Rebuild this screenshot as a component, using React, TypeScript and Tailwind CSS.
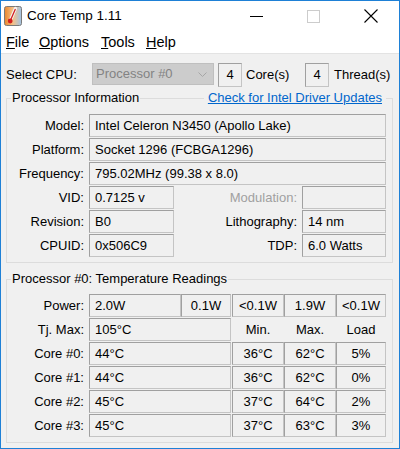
import type { ReactNode } from 'react';

const FONT = "font-['Liberation_Sans',Arial,sans-serif]";
const EDGE = 'border border-[#c4c4c4] border-t-[#a0a0a0] border-l-[#a0a0a0]';

function Field({ className, center, children }: { className: string; center?: boolean; children?: ReactNode }) {
  return (
    <div className={`flex h-[23px] shrink-0 items-center ${EDGE} ${center ? 'justify-center' : 'pl-[5px]'} ${className}`}>
      {children}
    </div>
  );
}

function Label({ className, muted, children }: { className: string; muted?: boolean; children: ReactNode }) {
  return <div className={`shrink-0 text-right ${muted ? 'text-[#a0a0a0]' : 'text-black'} ${className}`}>{children}</div>;
}

function Row({ children }: { children: ReactNode }) {
  return <div className="mb-[1px] flex h-[23px] items-center">{children}</div>;
}

function AppIcon() {
  return (
    <svg width="18" height="20" viewBox="0 0 18 20">
      <defs>
        <linearGradient id="ic" x1="0" y1="0" x2="1" y2="0">
          <stop offset="0" stopColor="#e9862c" />
          <stop offset="0.5" stopColor="#f4c28a" />
          <stop offset="1" stopColor="#9fc3e6" />
        </linearGradient>
      </defs>
      <rect x="0.5" y="0.5" width="17" height="19" rx="2" fill="url(#ic)" stroke="#7a7a7a" />
      <path d="M11.5 2.5 L6.5 14" stroke="#f4f4f4" strokeWidth="3.2" strokeLinecap="round" />
      <path d="M11.2 3.5 L6.8 13.5" stroke="#d41f1f" strokeWidth="1.3" strokeLinecap="round" />
      <circle cx="6.2" cy="15" r="2.4" fill="#d41f1f" />
    </svg>
  );
}

const cores = [
  { name: 'Core #0:', t: '44°C', min: '36°C', max: '62°C', load: '5%' },
  { name: 'Core #1:', t: '44°C', min: '36°C', max: '62°C', load: '0%' },
  { name: 'Core #2:', t: '45°C', min: '37°C', max: '64°C', load: '2%' },
  { name: 'Core #3:', t: '45°C', min: '37°C', max: '63°C', load: '3%' },
];

export default function App() {
  return (
    <div className={`h-[449px] w-[400px] overflow-hidden border border-[#1e80d6] bg-[#f0f0f0] text-[13px] leading-[16px] text-black ${FONT}`}>
      {/* Title bar */}
      <div className="flex h-[30px] items-center bg-white">
        <div className="ml-[3px] flex w-[23px] items-center">
          <AppIcon />
        </div>
        <div className="text-[13.5px]">Core Temp 1.11</div>
        <div className="ml-auto flex h-full">
          <div className="flex h-full w-[57px] items-center justify-center">
            <svg width="13" height="13" viewBox="0 0 13 13">
              <path d="M0 6.5 H13" stroke="#000" strokeWidth="1" />
            </svg>
          </div>
          <div className="flex h-full w-[57px] items-center justify-center">
            <svg width="13" height="13" viewBox="0 0 13 13">
              <rect x="0.5" y="0.5" width="12" height="12" fill="none" stroke="#cccccc" strokeWidth="1" />
            </svg>
          </div>
          <div className="flex h-full w-[57px] items-center justify-center">
            <svg width="14" height="14" viewBox="0 0 14 14">
              <path d="M0.5 0.5 L13.5 13.5 M13.5 0.5 L0.5 13.5" stroke="#000" strokeWidth="1.1" />
            </svg>
          </div>
        </div>
      </div>

      {/* Menu bar */}
      <div className="flex h-[23px] items-center border-b border-[#e3e3e3] bg-white pl-[5px] text-[14.5px]">
        <span className="w-[33px]"><u>F</u>ile</span>
        <span className="w-[62px]"><u>O</u>ptions</span>
        <span className="w-[45px]"><u>T</u>ools</span>
        <span><u>H</u>elp</span>
      </div>

      {/* Select CPU */}
      <div className="mt-[9px] flex h-[24px] items-center pl-[5px]">
        <div className="w-[86px]">Select CPU:</div>
        <div className="flex h-[22px] w-[122px] items-center self-start border border-[#bfbfbf] bg-[#cccccc] pl-[3px] pr-[6px] text-[#838383]">
          <span>Processor #0</span>
          <svg className="ml-auto" width="9" height="5" viewBox="0 0 9 5">
            <path d="M0.5 0.5 L4.5 4.5 L8.5 0.5" fill="none" stroke="#a6a6a6" strokeWidth="1" />
          </svg>
        </div>
        <div className={`ml-[4px] flex h-[24px] w-[24px] items-center justify-center ${EDGE}`}>4</div>
        <div className="ml-[4px] w-[59px]">Core(s)</div>
        <div className={`flex h-[24px] w-[24px] items-center justify-center ${EDGE}`}>4</div>
        <div className="ml-[5px]">Thread(s)</div>
      </div>

      {/* Processor Information */}
      <div className="relative ml-[5px] mt-[11px] h-[165px] w-[387px] border border-[#dcdcdc] pt-[15px]">
        <div className="absolute -top-[9px] left-[4px] bg-[#f0f0f0] px-[1px] leading-[16px]">Processor Information</div>
        <div className="absolute -top-[9px] right-[6px] bg-[#f0f0f0] px-[4px] leading-[16px] text-[#0066cc] underline">
          Check for Intel Driver Updates
        </div>
        <Row>
          <Label className="w-[77px]">Model:</Label>
          <Field className="ml-[5px] w-[297px]">Intel Celeron N3450 (Apollo Lake)</Field>
        </Row>
        <Row>
          <Label className="w-[77px]">Platform:</Label>
          <Field className="ml-[5px] w-[297px]">Socket 1296 (FCBGA1296)</Field>
        </Row>
        <Row>
          <Label className="w-[77px]">Frequency:</Label>
          <Field className="ml-[5px] w-[297px]">795.02MHz (99.38 x 8.0)</Field>
        </Row>
        <Row>
          <Label className="w-[77px]">VID:</Label>
          <Field className="ml-[5px] w-[85px]">0.7125 v</Field>
          <Label className="w-[123px]" muted>Modulation:</Label>
          <Field className="ml-[5px] w-[84px]" />
        </Row>
        <Row>
          <Label className="w-[77px]">Revision:</Label>
          <Field className="ml-[5px] w-[85px]">B0</Field>
          <Label className="w-[123px]">Lithography:</Label>
          <Field className="ml-[5px] w-[84px]">14 nm</Field>
        </Row>
        <Row>
          <Label className="w-[77px]">CPUID:</Label>
          <Field className="ml-[5px] w-[85px]">0x506C9</Field>
          <Label className="w-[123px]">TDP:</Label>
          <Field className="ml-[5px] w-[84px]">6.0 Watts</Field>
        </Row>
      </div>

      {/* Temperature Readings */}
      <div className="relative ml-[5px] mt-[16px] h-[164px] w-[387px] border border-[#dcdcdc] pt-[14px]">
        <div className="absolute -top-[9px] left-[4px] bg-[#f0f0f0] px-[1px] leading-[16px]">
          Processor #0: Temperature Readings
        </div>
        <Row>
          <Label className="w-[77px]">Power:</Label>
          <Field className="ml-[5px] w-[92px]">2.0W</Field>
          <Field className="w-[50px]" center>0.1W</Field>
          <Field className="ml-[1px] w-[52px]" center>&lt;0.1W</Field>
          <Field className="w-[52px]" center>1.9W</Field>
          <Field className="w-[50px]" center>&lt;0.1W</Field>
        </Row>
        <Row>
          <Label className="w-[77px]">Tj. Max:</Label>
          <Field className="ml-[5px] w-[142px]">105°C</Field>
          <div className="ml-[1px] w-[52px] text-center">Min.</div>
          <div className="w-[52px] text-center">Max.</div>
          <div className="w-[50px] text-center">Load</div>
        </Row>
        {cores.map((c) => (
          <Row key={c.name}>
            <Label className="w-[77px]">{c.name}</Label>
            <Field className="ml-[5px] w-[142px]">{c.t}</Field>
            <Field className="ml-[1px] w-[52px]" center>{c.min}</Field>
            <Field className="w-[52px]" center>{c.max}</Field>
            <Field className="w-[50px]" center>{c.load}</Field>
          </Row>
        ))}
      </div>
    </div>
  );
}
